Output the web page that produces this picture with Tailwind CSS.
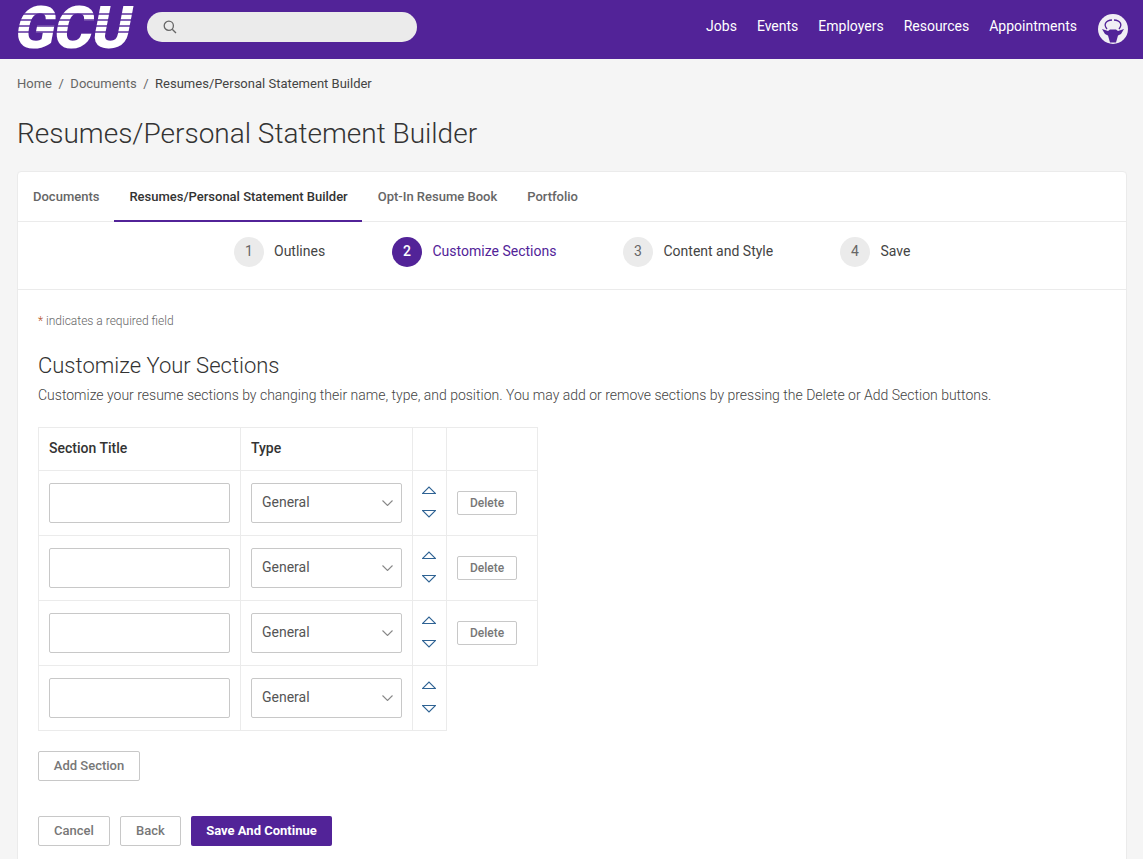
<!DOCTYPE html>
<html lang="en">
<head>
<meta charset="UTF-8">
<title>Resumes/Personal Statement Builder</title>
<script src="https://cdn.jsdelivr.net/npm/@tailwindcss/browser@4"></script>
</head>
<body class="bg-[#f5f5f5] font-['Roboto',sans-serif] text-[#333]">
<div class="h-[859px] overflow-hidden">
  <!-- top bar -->
  <header class="h-[59px] bg-[#522398] flex items-center pl-[18px] pr-[15px] pb-[5px]">
    <div class="relative w-[117px] h-[44px] shrink-0 mt-[3px]">
      <span class="absolute left-[-6px] top-[-1px] text-[59px] leading-[44px] font-black text-white tracking-[-1px] origin-bottom-left scale-x-[1] skew-x-[-11deg]">GCU</span>
      <div class="absolute left-0 right-0 top-[2px] h-[27px] bg-[repeating-linear-gradient(180deg,transparent_0,transparent_4px,rgba(82,35,152,0.7)_4px,rgba(82,35,152,0.7)_6px)]"></div>
    </div>
    <div class="ml-[12px] w-[270px] h-[30px] rounded-full bg-[#ebebeb] flex items-center pl-[16px]">
      <svg class="w-[14px] h-[14px]" viewBox="0 0 14 14" fill="none" stroke="#666" stroke-width="1.3"><circle cx="5.8" cy="5.8" r="4.6"/><path d="M9.2 9.2 13 13"/></svg>
    </div>
    <nav class="ml-auto flex items-center gap-[20px] text-[14px] text-white">
      <a class="mt-[-2px]">Jobs</a><a class="mt-[-2px]">Events</a><a class="mt-[-2px]">Employers</a><a class="mt-[-2px]">Resources</a><a class="mt-[-2px]">Appointments</a>
      <svg class="w-[30px] h-[30px] ml-[1px] mt-[3px]" viewBox="0 0 30 30">
        <circle cx="15" cy="15" r="15" fill="#f0eef4"/>
        <path d="M9 15C5 10 8 6.500 14 6M21 15C25 10 22 6.500 16 6" fill="none" stroke="#522398" stroke-width="1.300"/>
        <path d="M4 15l6 2 2-1.500h6l2 1.500 6-2-3 5-3 1.500-2 7h-6l-2-7-3-1.500z" fill="#522398"/>
      </svg>
    </nav>
  </header>

  <main class="px-[17px]">
    <ol class="flex items-center h-[49px] text-[13px] text-[#666]">
      <li>Home</li><li class="mx-[6.5px]">/</li><li>Documents</li><li class="mx-[6.5px]">/</li><li class="text-[#444]">Resumes/Personal Statement Builder</li>
    </ol>
    <h1 class="text-[28px] leading-[36px] font-light text-[#333] mt-[8px] mb-[19px]">Resumes/Personal Statement Builder</h1>

    <section class="w-[1110px] bg-white border border-[#ebebeb] rounded-[4px]">
      <div class="flex h-[50px] border-b border-[#ebebeb] text-[13px] font-medium text-[#666] pl-[1px]">
        <a class="px-[14px] flex items-center">Documents</a>
        <a class="pl-[15px] pr-[14px] pt-[2px] flex items-center text-[#333] border-b-2 border-[#522398] h-[50px] ml-[1px]">Resumes/Personal Statement Builder</a>
        <a class="pl-[16px] pr-[15px] flex items-center">Opt-In Resume Book</a>
        <a class="px-[15px] flex items-center">Portfolio</a>
      </div>

      <div class="flex h-[68px] border-b border-[#ebebeb] pl-[216px] pb-[8px] items-center text-[14px] text-[#444]">
        <div class="flex items-center gap-[10px] w-[158px]"><span class="w-[30px] h-[30px] rounded-full bg-[#ebebeb] flex items-center justify-center text-[#666]">1</span>Outlines</div>
        <div class="flex items-center gap-[10.5px] w-[231px] text-[#522398]"><span class="w-[30px] h-[30px] rounded-full bg-[#522398] flex items-center justify-center text-white font-medium">2</span>Customize Sections</div>
        <div class="flex items-center gap-[10.5px] w-[217px]"><span class="w-[30px] h-[30px] rounded-full bg-[#ebebeb] flex items-center justify-center text-[#666]">3</span>Content and Style</div>
        <div class="flex items-center gap-[10.5px]"><span class="w-[30px] h-[30px] rounded-full bg-[#ebebeb] flex items-center justify-center text-[#666]">4</span>Save</div>
      </div>

      <div class="px-[20px] pt-[24px]">
        <p class="text-[12px] leading-[14px] text-[#666] font-light"><span class="text-[#b5532a]">*</span> indicates a required field</p>
        <h2 class="text-[22px] leading-[28px] font-light text-[#333] mt-[24px]">Customize Your Sections</h2>
        <p class="text-[14px] leading-[20px] font-light text-[#444] mt-[5px]">Customize your resume sections by changing their name, type, and position. You may add or remove sections by pressing the Delete or Add Section buttons.</p>

        <table class="mt-[22px] border-collapse table-fixed w-[500px] text-[14px]">
          <colgroup><col class="w-[202px]"><col class="w-[172px]"><col class="w-[34px]"><col class="w-[91px]"></colgroup>
          <thead>
            <tr class="h-[43px] text-left font-medium">
              <th class="border border-[#ebebeb] px-[10px] pb-[2px] font-medium">Section Title</th>
              <th class="border border-[#ebebeb] px-[10px] pb-[2px] font-medium">Type</th>
              <th class="border border-[#ebebeb]"></th>
              <th class="border border-[#ebebeb]"></th>
            </tr>
          </thead>
          <tbody>
            <tr class="h-[65px]">
              <td class="border border-[#ebebeb] px-[10px]"><input class="block w-[181px] h-[40px] bg-white border border-[#c8c8c8] rounded-[2px]"></td>
              <td class="border border-[#ebebeb] px-[10px]"><div class="w-[151px] h-[40px] border border-[#c8c8c8] rounded-[2px] flex items-center justify-between pl-[10px] pr-[8px] text-[#555]"><span class="mt-[-2px]">General</span><svg class="w-[11px] h-[6px]" viewBox="0 0 11 6" fill="none" stroke="#888" stroke-width="1.100"><path d="M.5.5l5 5 5-5"/></svg></div></td>
              <td class="border border-[#ebebeb]"><div class="flex flex-col items-center gap-[16px] mb-[2px] mr-[1px]"><svg class="w-[14px] h-[8px]" viewBox="0 0 14 8" fill="none" stroke="#2f6394" stroke-width="1.100"><path d="M.5 7.500h13L7 1z"/></svg><svg class="w-[14px] h-[8px]" viewBox="0 0 14 8" fill="none" stroke="#2f6394" stroke-width="1.100"><path d="M.5.5h13L7 7z"/></svg></div></td>
              <td class="border border-[#ebebeb] px-[10px]"><button class="block w-[60px] h-[24px] border border-[#c8c8c8] rounded-[2px] text-[12px] font-medium text-[#777]">Delete</button></td>
            </tr>
            <tr class="h-[65px]">
              <td class="border border-[#ebebeb] px-[10px]"><input class="block w-[181px] h-[40px] bg-white border border-[#c8c8c8] rounded-[2px]"></td>
              <td class="border border-[#ebebeb] px-[10px]"><div class="w-[151px] h-[40px] border border-[#c8c8c8] rounded-[2px] flex items-center justify-between pl-[10px] pr-[8px] text-[#555]"><span class="mt-[-2px]">General</span><svg class="w-[11px] h-[6px]" viewBox="0 0 11 6" fill="none" stroke="#888" stroke-width="1.100"><path d="M.5.5l5 5 5-5"/></svg></div></td>
              <td class="border border-[#ebebeb]"><div class="flex flex-col items-center gap-[16px] mb-[2px] mr-[1px]"><svg class="w-[14px] h-[8px]" viewBox="0 0 14 8" fill="none" stroke="#2f6394" stroke-width="1.100"><path d="M.5 7.500h13L7 1z"/></svg><svg class="w-[14px] h-[8px]" viewBox="0 0 14 8" fill="none" stroke="#2f6394" stroke-width="1.100"><path d="M.5.5h13L7 7z"/></svg></div></td>
              <td class="border border-[#ebebeb] px-[10px]"><button class="block w-[60px] h-[24px] border border-[#c8c8c8] rounded-[2px] text-[12px] font-medium text-[#777]">Delete</button></td>
            </tr>
            <tr class="h-[65px]">
              <td class="border border-[#ebebeb] px-[10px]"><input class="block w-[181px] h-[40px] bg-white border border-[#c8c8c8] rounded-[2px]"></td>
              <td class="border border-[#ebebeb] px-[10px]"><div class="w-[151px] h-[40px] border border-[#c8c8c8] rounded-[2px] flex items-center justify-between pl-[10px] pr-[8px] text-[#555]"><span class="mt-[-2px]">General</span><svg class="w-[11px] h-[6px]" viewBox="0 0 11 6" fill="none" stroke="#888" stroke-width="1.100"><path d="M.5.5l5 5 5-5"/></svg></div></td>
              <td class="border border-[#ebebeb]"><div class="flex flex-col items-center gap-[16px] mb-[2px] mr-[1px]"><svg class="w-[14px] h-[8px]" viewBox="0 0 14 8" fill="none" stroke="#2f6394" stroke-width="1.100"><path d="M.5 7.500h13L7 1z"/></svg><svg class="w-[14px] h-[8px]" viewBox="0 0 14 8" fill="none" stroke="#2f6394" stroke-width="1.100"><path d="M.5.5h13L7 7z"/></svg></div></td>
              <td class="border border-[#ebebeb] px-[10px]"><button class="block w-[60px] h-[24px] border border-[#c8c8c8] rounded-[2px] text-[12px] font-medium text-[#777]">Delete</button></td>
            </tr>
            <tr class="h-[65px]">
              <td class="border border-[#ebebeb] px-[10px]"><input class="block w-[181px] h-[40px] bg-white border border-[#c8c8c8] rounded-[2px]"></td>
              <td class="border border-[#ebebeb] px-[10px]"><div class="w-[151px] h-[40px] border border-[#c8c8c8] rounded-[2px] flex items-center justify-between pl-[10px] pr-[8px] text-[#555]"><span class="mt-[-2px]">General</span><svg class="w-[11px] h-[6px]" viewBox="0 0 11 6" fill="none" stroke="#888" stroke-width="1.100"><path d="M.5.5l5 5 5-5"/></svg></div></td>
              <td class="border border-[#ebebeb]"><div class="flex flex-col items-center gap-[16px] mb-[2px] mr-[1px]"><svg class="w-[14px] h-[8px]" viewBox="0 0 14 8" fill="none" stroke="#2f6394" stroke-width="1.100"><path d="M.5 7.500h13L7 1z"/></svg><svg class="w-[14px] h-[8px]" viewBox="0 0 14 8" fill="none" stroke="#2f6394" stroke-width="1.100"><path d="M.5.5h13L7 7z"/></svg></div></td>
              <td></td>
            </tr>
          </tbody>
        </table>

        <button class="block mt-[20px] w-[102px] h-[30px] border border-[#c8c8c8] rounded-[2px] text-[13px] font-medium text-[#777]">Add Section</button>
        <div class="flex gap-[10px] mt-[35px] pb-[40px]">
          <button class="w-[72px] h-[30px] border border-[#c8c8c8] rounded-[2px] text-[13px] font-medium text-[#777]">Cancel</button>
          <button class="w-[61px] h-[30px] border border-[#c8c8c8] rounded-[2px] text-[13px] font-medium text-[#777]">Back</button>
          <button class="w-[141px] h-[30px] bg-[#522398] rounded-[2px] text-[13px] font-bold text-white">Save And Continue</button>
        </div>
      </div>
    </section>
  </main>
</div>
</body>
</html>
